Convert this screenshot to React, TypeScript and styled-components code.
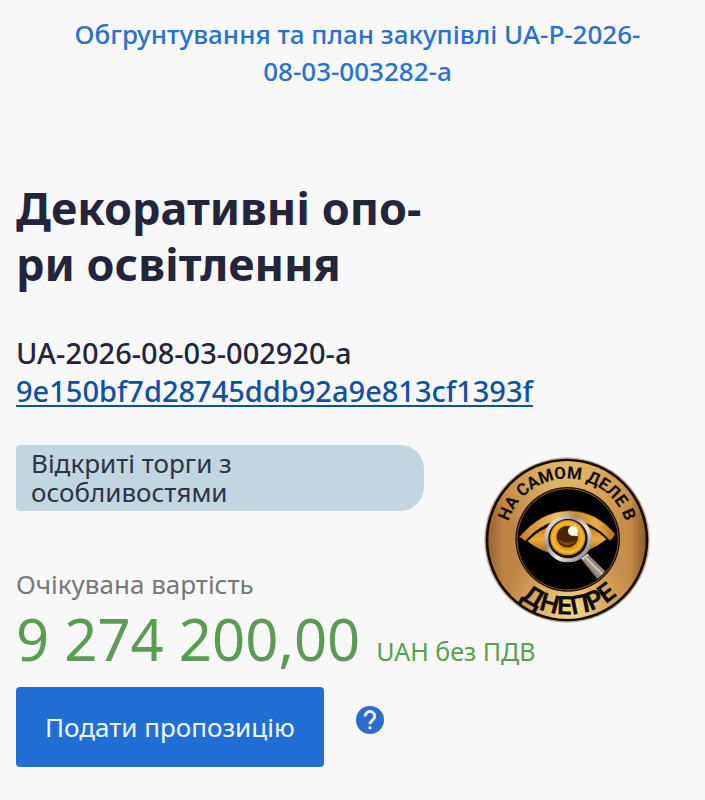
import React from "react";
import styled, { createGlobalStyle } from "styled-components";

const GlobalStyle = createGlobalStyle`
  *, *::before, *::after { box-sizing: border-box; }
  body {
    margin: 0;
    background: #f8f8f8;
    color: #24243a;
    font-family: "Noto Sans", "Open Sans", sans-serif;
  }
`;

const Page = styled.main`
  padding: 16px 16px 32px;
`;

const PlanBar = styled.nav`
  padding: 0 40px 0 50px;
  text-align: center;
  font-size: 26px;
  line-height: 37px;
  font-weight: 500;
`;

const PlanLink = styled.a`
  color: #2a70d0;
  text-decoration: none;
`;

const Title = styled.h1`
  margin: 90px 0 0;
  font-size: 45px;
  line-height: 56px;
  font-weight: 700;
`;

const Identifiers = styled.div`
  margin-top: 42px;
  font-size: 29px;
  line-height: 38px;
  font-weight: 500;
`;

const TenderId = styled.div``;

const HashLink = styled.a`
  color: #0f50a6;
  text-decoration-line: underline;
  text-decoration-thickness: 2px;
  text-underline-offset: 3px;
  text-decoration-skip-ink: none;
`;

const Procedure = styled.section`
  position: relative;
  margin-top: 35px;
`;

const ProcedureTag = styled.div`
  max-width: 408px;
  padding: 4px 128px 4px 15px;
  border-radius: 4px 24px 24px 4px;
  background: #c3d6df;
  color: #2d3444;
  font-size: 26px;
  line-height: 29px;
`;

const ValueLabel = styled.div`
  margin-top: 56px;
  color: #777777;
  font-size: 26px;
  line-height: 34px;
`;

const Amount = styled.div`
  display: flex;
  flex-wrap: wrap;
  align-items: baseline;
  gap: 16px;
  color: #5a9c52;
  font-size: 58px;
  line-height: 76px;
`;

const Currency = styled.span`
  font-size: 25px;
  line-height: 34px;
`;

const Actions = styled.div`
  display: flex;
  align-items: flex-start;
  gap: 32px;
  margin-top: 10px;
`;

const SubmitButton = styled.button`
  padding: 20px 29px;
  border: 0;
  border-radius: 4px;
  background: #216fd4;
  color: #f2f7ff;
  font: inherit;
  font-size: 26px;
  line-height: 40px;
  cursor: pointer;
`;

const HelpButton = styled.button`
  margin-top: 19px;
  padding: 0;
  border: 0;
  background: none;
  line-height: 0;
  cursor: pointer;
`;

const Emblem = styled.svg`
  position: absolute;
  top: 5px;
  left: 459px;
  width: 185px;
  height: 180px;
`;

const EmblemText = styled.text`
  fill: #120c08;
  font-family: Roboto, "Liberation Sans", sans-serif;
`;

const EmblemCity = styled(EmblemText)`
  font-family: Inter, "Liberation Sans", sans-serif;
`;

function HelpIcon() {
  return (
    <svg width="28" height="28" viewBox="0 0 28 28" aria-hidden="true">
      <circle cx="14" cy="14" r="14" fill="#2a6dcb" />
      <path
        d="M9.3 10.4a4.7 4.7 0 1 1 7.9 3.2c-1.5 1.4-3.2 2.2-3.2 4.6"
        fill="none"
        stroke="#f4f8ff"
        strokeWidth="2.8"
      />
      <rect x="12.6" y="20.4" width="2.8" height="2.8" fill="#f4f8ff" />
    </svg>
  );
}

function DniproEmblem() {
  return (
    <Emblem viewBox="0 0 555 540" role="img" aria-label="На самом деле в Днепре">
      <defs>
        <linearGradient id="ring" x1="0" y1="0" x2="1" y2="0">
          <stop offset="0" stopColor="#9a6430" />
          <stop offset="0.1" stopColor="#bd8443" />
          <stop offset="0.5" stopColor="#c99550" />
          <stop offset="0.9" stopColor="#c58c48" />
          <stop offset="1" stopColor="#8f5a2b" />
        </linearGradient>
        <radialGradient id="shineTop" cx="0.5" cy="0.05" r="0.5">
          <stop offset="0" stopColor="#e6c06c" stopOpacity="0.9" />
          <stop offset="1" stopColor="#e6c06c" stopOpacity="0" />
        </radialGradient>
        <radialGradient id="shineBottom" cx="0.52" cy="0.95" r="0.42">
          <stop offset="0" stopColor="#f6df8c" />
          <stop offset="1" stopColor="#e8b968" stopOpacity="0" />
        </radialGradient>
        <linearGradient id="lid" x1="0" y1="0" x2="1" y2="0">
          <stop offset="0" stopColor="#c87f24" />
          <stop offset="0.4" stopColor="#f0c265" />
          <stop offset="0.6" stopColor="#c98b2c" />
          <stop offset="0.8" stopColor="#e8ae43" />
          <stop offset="1" stopColor="#b8701c" />
        </linearGradient>
        <linearGradient id="white" x1="0" y1="0" x2="0" y2="1">
          <stop offset="0" stopColor="#b06a18" />
          <stop offset="0.5" stopColor="#eda936" />
          <stop offset="1" stopColor="#9c5a18" />
        </linearGradient>
        <linearGradient id="rim" x1="0" y1="0" x2="1" y2="1">
          <stop offset="0" stopColor="#ffffff" />
          <stop offset="0.35" stopColor="#99928a" />
          <stop offset="0.6" stopColor="#e9e5df" />
          <stop offset="1" stopColor="#77706b" />
        </linearGradient>
        <radialGradient id="iris">
          <stop offset="0.35" stopColor="#a45c0e" />
          <stop offset="0.65" stopColor="#e29a17" />
          <stop offset="0.85" stopColor="#f4bd38" />
          <stop offset="1" stopColor="#c47a12" />
        </radialGradient>
        <linearGradient id="handle" x1="0" y1="1" x2="1" y2="0">
          <stop offset="0.2" stopColor="#4c4038" />
          <stop offset="0.5" stopColor="#a89c92" />
          <stop offset="0.8" stopColor="#6a594e" />
        </linearGradient>
        <clipPath id="disc">
          <circle cx="278" cy="268" r="148" />
        </clipPath>
        <path id="topArc" d="M92 270 A184 184 0 0 1 460 270" />
        <path id="bottomArc" d="M52 270 A224 224 0 0 0 500 270" />
      </defs>

      <circle cx="276" cy="270" r="248" fill="#c3ad94" />
      <circle cx="276" cy="270" r="244" fill="#160d07" />
      <circle cx="276" cy="270" r="236" fill="url(#ring)" />
      <circle cx="276" cy="270" r="236" fill="url(#shineTop)" />
      <circle cx="276" cy="270" r="236" fill="url(#shineBottom)" />
      <circle cx="278" cy="268" r="157" fill="#1c1008" />
      <circle cx="278" cy="268" r="152" fill="#000000" stroke="#b98a4a" strokeWidth="2" />

      <path d="M158 274 Q205 222 279 218 Q352 222 394 268 Q350 306 279 318 Q205 314 158 274Z" fill="url(#white)" />
      <path
        d="M132 262 Q196 183 283 182 Q363 182 421 252 Q414 265 405 272 Q351 211 279 209 Q205 210 150 274 Q143 264 132 262Z"
        fill="url(#lid)"
        stroke="#3a2008"
        strokeWidth="2"
      />
      <g clipPath="url(#disc)">
        <path d="M318 326 L338 312 L402 374 L376 398Z" fill="url(#handle)" />
        <path d="M334 325 L388 378" stroke="#d9cfc6" strokeWidth="4" />
        <path d="M321 328 L340 313" stroke="#d8d0ca" strokeWidth="6" />
      </g>
      <circle cx="279" cy="266" r="70" fill="#201008" />
      <circle cx="279" cy="266" r="65" fill="none" stroke="url(#rim)" strokeWidth="12" />
      <circle cx="278" cy="263" r="53" fill="url(#iris)" />
      <circle cx="277" cy="260" r="32" fill="#4a2409" />
      <path d="M250 268 A29 29 0 0 0 303 270 Q277 286 250 268Z" fill="#7a4717" />
      <circle cx="294" cy="243" r="15" fill="#fff7e2" />
      <circle cx="304" cy="254" r="5" fill="#fff0cc" />

      <EmblemText fontSize="51" fontWeight="700">
        <textPath href="#topArc" startOffset="50%" textAnchor="middle">
          НА САМОМ ДЕЛЕ В
        </textPath>
      </EmblemText>
      <EmblemCity fontSize="76" fontWeight="700">
        <textPath href="#bottomArc" startOffset="51%" textAnchor="middle">
          ДНЕПРЕ
        </textPath>
      </EmblemCity>
    </Emblem>
  );
}

export default function App() {
  return (
    <>
      <GlobalStyle />
      <Page>
        <PlanBar>
          <PlanLink href="#plan">Обгрунтування та план закупівлі UA-P-2026-08-03-003282-a</PlanLink>
        </PlanBar>
        <Title>
          Декоративні опо-
          <br />
          ри освітлення
        </Title>
        <Identifiers>
          <TenderId>UA-2026-08-03-002920-a</TenderId>
          <HashLink href="#tender">9e150bf7d28745ddb92a9e813cf1393f</HashLink>
        </Identifiers>
        <Procedure>
          <ProcedureTag>Відкриті торги з особливостями</ProcedureTag>
          <ValueLabel>Очікувана вартість</ValueLabel>
          <DniproEmblem />
        </Procedure>
        <Amount>
          9 274 200,00
          <Currency>UAH без ПДВ</Currency>
        </Amount>
        <Actions>
          <SubmitButton type="button">Подати пропозицію</SubmitButton>
          <HelpButton type="button" aria-label="Довідка">
            <HelpIcon />
          </HelpButton>
        </Actions>
      </Page>
    </>
  );
}
